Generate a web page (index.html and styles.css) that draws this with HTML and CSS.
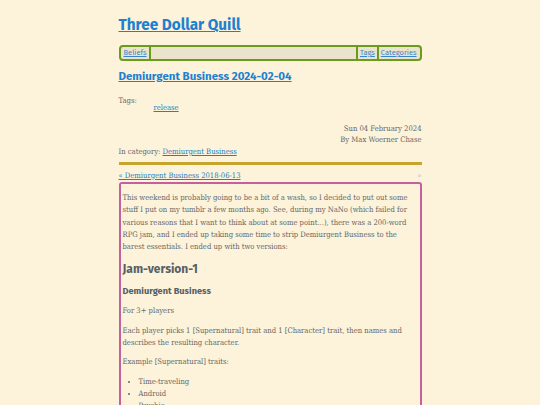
FILE: index.html
```html
<!DOCTYPE html>
<html>
<head>
<meta charset="utf-8">
<link rel="stylesheet" href="styles.css">
</head>
<body>
<div class="page">
  <header class="site-header">
    <h1 class="site-title"><a href="#">Three Dollar Quill</a></h1>
    <nav class="nav">
      <a class="nav-item" href="#">Beliefs</a>
      <span class="nav-fill"></span>
      <a class="nav-item" href="#">Tags</a>
      <a class="nav-item last" href="#">Categories</a>
    </nav>
  </header>
  <article>
    <h2 class="post-title"><a href="#">Demiurgent Business 2024-02-04</a></h2>
    <div class="tags">
      <div class="tags-label">Tags:</div>
      <div class="tags-list"><a href="#">release</a></div>
    </div>
    <div class="meta">
      <div>Sun 04 February 2024</div>
      <div>By Max Woerner Chase</div>
    </div>
    <div class="category">In category: <a href="#">Demiurgent Business</a></div>
    <div class="pager">
      <a href="#">« Demiurgent Business 2018-06-13</a>
      <span class="next">»</span>
    </div>
    <div class="content">
      <p>This weekend is probably going to be a bit of a wash, so I decided to put out some stuff I put on my tumblr a few months ago. See, during my NaNo (which failed for various reasons that I want to think about at some point...), there was a 200-word RPG jam, and I ended up taking some time to strip Demiurgent Business to the barest essentials. I ended up with two versions:</p>
      <h3 class="h-big">Jam-version-1</h3>
      <h4 class="h-small">Demiurgent Business</h4>
      <p>For 3+ players</p>
      <p>Each player picks 1 [Supernatural] trait and 1 [Character] trait, then names and describes the resulting character.</p>
      <p>Example [Supernatural] traits:</p>
      <ul>
        <li>Time-traveling</li>
        <li>Android</li>
        <li>Psychic</li>
        <li>Alien</li>
      </ul>
    </div>
  </article>
</div>
</body>
</html>
```
FILE: styles.css
```css
html, body {
  margin: 0;
  padding: 0;
  background: #fcf3da;
  height: 405px;
  overflow: hidden;
}
body {
  font-family: "Roboto Slab", "DejaVu Serif Condensed", "DejaVu Serif", serif;
  font-size: 7.6px;
  color: #666;
}
a { color: #2b7cc4; }
.page {
  width: 303px;
  margin: 0 auto;
}
.site-header { padding-top: 15px; }
.site-title {
  margin: 0;
  font-family: "Fira Sans", Lato, "Noto Sans", sans-serif;
  font-weight: 700;
  font-size: 15.3px;
  line-height: 20px;
}
.site-title a { color: #1f7fd0; }
.nav {
  display: flex;
  margin-top: 10px;
  height: 12px;
  border: 2px solid #6a9a1e;
  border-radius: 4px;
  background: #ebe4cd;
  font-family: "Fira Sans", Lato, "Noto Sans", sans-serif;
  font-size: 7.5px;
  line-height: 12px;
  padding: 0 1px;
}
.nav-item {
  padding: 0 2px;
  color: #3a86c8;
}
.nav-fill {
  flex: 1;
  border-left: 2px solid #6a9a1e;
  border-right: 2px solid #6a9a1e;
}
.nav-item.last { border-left: 2px solid #6a9a1e; }
.post-title {
  margin: 7px 0 0;
  font-family: "Fira Sans", Lato, "Noto Sans", sans-serif;
  font-weight: 700;
  font-size: 11.5px;
  line-height: 16px;
}
.post-title a { color: #1f7fd0; }
.tags { margin-top: 13px; line-height: 7px; }
.tags-list { padding-left: 35px; }
.meta {
  margin-top: 12px;
  text-align: right;
  line-height: 11px;
}
.category { line-height: 12px; margin-top: 1px; }
.pager {
  margin-top: 4px;
  border-top: 3px solid #c7a52c;
  padding-top: 6px;
  display: flex;
  justify-content: space-between;
  line-height: 10px;
}
.pager .next { color: #bbb; }
.content {
  margin-top: 1px;
  border: 2px solid #c5609f;
  border-bottom: none;
  border-radius: 3px 3px 0 0;
  padding: 8px 2px 0;
  line-height: 12.3px;
}
.content p { margin: 0 0 7px; }
.h-big {
  margin: 8px 0 7px;
  font-family: "Fira Sans", Lato, "Noto Sans", sans-serif;
  font-size: 12px;
  line-height: 16px;
  color: #566068;
}
.h-small {
  margin: 0 0 8px;
  font-family: "Fira Sans", Lato, "Noto Sans", sans-serif;
  font-size: 9.2px;
  line-height: 13px;
  color: #566068;
}
.content ul { margin: 0; padding-left: 16px; line-height: 12px; }
```
